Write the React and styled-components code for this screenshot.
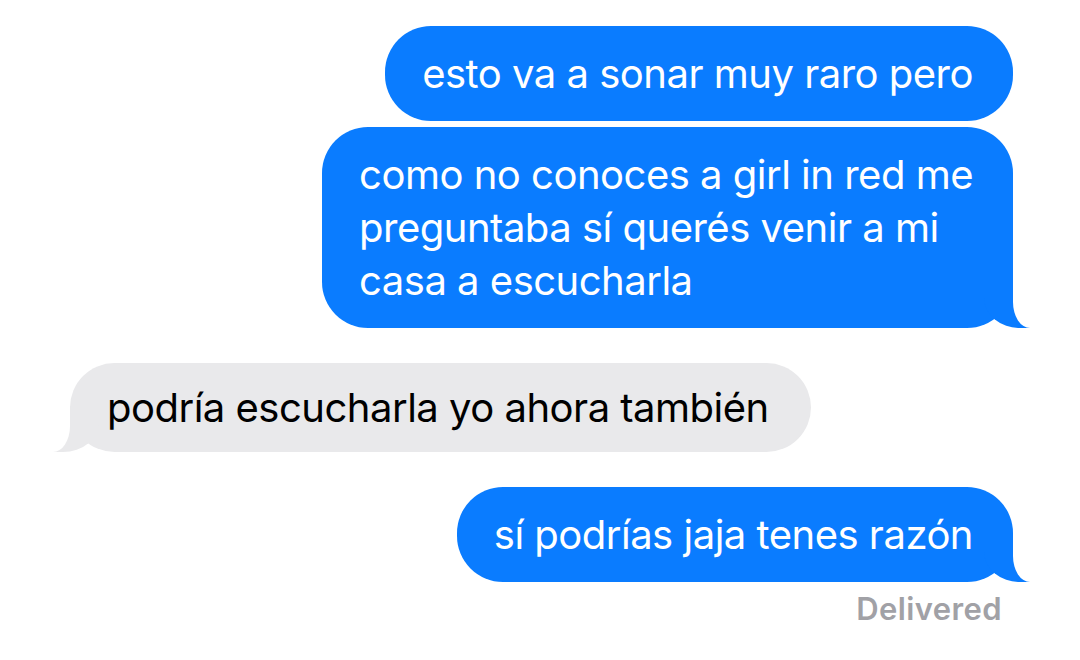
import React from 'react';
import styled, { createGlobalStyle, css } from 'styled-components';

const GlobalStyle = createGlobalStyle`
  html, body {
    margin: 0;
    padding: 0;
    background: #ffffff;
  }
  body {
    font-family: Inter, "Noto Sans", "Liberation Sans", sans-serif;
    -webkit-font-smoothing: antialiased;
  }
`;

const Thread = styled.div`
  display: flex;
  flex-direction: column;
  width: 1080px;
  height: 660px;
  box-sizing: border-box;
  padding: 26px 67px 0 70px;
  overflow: hidden;
`;

const blue = '#0a7cff';
const grey = '#e9e9eb';

const tailRight = css`
  &::before {
    content: '';
    position: absolute;
    bottom: 0;
    right: -17px;
    width: 46px;
    height: 46px;
    background: ${blue};
    border-bottom-left-radius: 36px 30px;
  }
  &::after {
    content: '';
    position: absolute;
    bottom: 0;
    right: -60px;
    width: 60px;
    height: 48px;
    background: #ffffff;
    border-bottom-left-radius: 17px 26px;
  }
`;

const tailLeft = css`
  &::before {
    content: '';
    position: absolute;
    bottom: 0;
    left: -17px;
    width: 46px;
    height: 46px;
    background: ${grey};
    border-bottom-right-radius: 36px 30px;
  }
  &::after {
    content: '';
    position: absolute;
    bottom: 0;
    left: -60px;
    width: 60px;
    height: 48px;
    background: #ffffff;
    border-bottom-right-radius: 17px 26px;
  }
`;

const Bubble = styled.div`
  position: relative;
  box-sizing: border-box;
  padding: ${(p) => (p.$mine ? '21px 40px 21px 37px' : '18px 42px 18px 37px')};
  border-radius: 46px;
  font-size: 40px;
  line-height: 53px;
  letter-spacing: -0.5px;
  white-space: nowrap;
  margin-top: ${(p) => p.$gap || 0}px;
  align-self: ${(p) => (p.$mine ? 'flex-end' : 'flex-start')};
  background: ${(p) => (p.$mine ? blue : grey)};
  color: ${(p) => (p.$mine ? '#ffffff' : '#000000')};
  ${(p) => p.$tail && (p.$mine ? tailRight : tailLeft)}
`;

const Text = styled.span`
  position: relative;
  z-index: 1;
`;

const Status = styled.div`
  align-self: flex-end;
  margin-top: 11px;
  margin-right: 11px;
  font-size: 31px;
  line-height: 31px;
  letter-spacing: 0.4px;
  font-weight: 600;
  color: #a1a1a6;
`;

const messages = [
  { mine: true, text: 'esto va a sonar muy raro pero' },
  {
    mine: true,
    gap: 6,
    tail: true,
    lines: ['como no conoces a girl in red me', 'preguntaba sí querés venir a mi', 'casa a escucharla'],
  },
  { mine: false, gap: 35, tail: true, text: 'podría escucharla yo ahora también' },
  { mine: true, gap: 35, tail: true, text: 'sí podrías jaja tenes razón' },
];

const App = () => (
  <>
    <GlobalStyle />
    <Thread>
      {messages.map((m, i) => (
        <Bubble key={i} $mine={m.mine} $gap={m.gap} $tail={m.tail}>
          <Text>
            {m.lines
              ? m.lines.map((l, j) => (
                  <React.Fragment key={j}>
                    {l}
                    {j < m.lines.length - 1 && <br />}
                  </React.Fragment>
                ))
              : m.text}
          </Text>
        </Bubble>
      ))}
      <Status>Delivered</Status>
    </Thread>
  </>
);

export default App;
